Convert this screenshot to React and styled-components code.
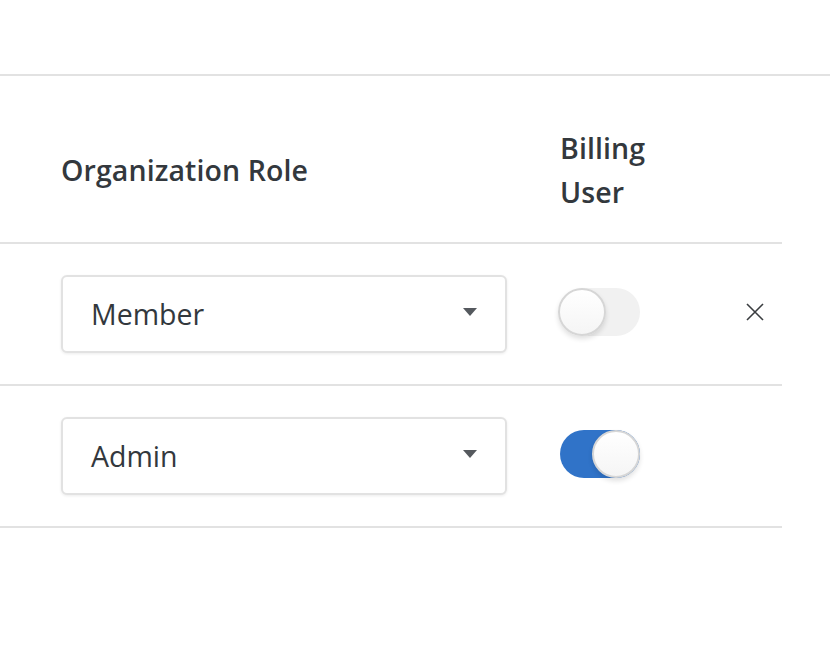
import React, { useState } from "react";
import styled, { createGlobalStyle, css } from "styled-components";

const GlobalStyle = createGlobalStyle`
  html, body {
    margin: 0;
    padding: 0;
    background: #ffffff;
    font-family: "Open Sans", "Noto Sans", sans-serif;
    color: #33383d;
  }
`;

const Page = styled.div`
  width: 830px;
  height: 670px;
  padding-top: 74px;
  box-sizing: border-box;
`;

const TopRule = styled.div`
  border-top: 2px solid #e2e2e2;
`;

const Table = styled.div`
  width: 782px;
`;

const Row = styled.div`
  display: grid;
  grid-template-columns: 446px 1fr 18px;
  column-gap: 53px;
  align-items: center;
  padding: 0 18px 0 61px;
  border-bottom: 2px solid #e2e2e2;

  ${({ header }) =>
    header
      ? css`
          padding-top: 50px;
          padding-bottom: 28px;
        `
      : css`
          height: 140px;
        `}
`;

const HeaderCell = styled.div`
  font-size: 28.5px;
  font-weight: 600;
  line-height: 44px;
  letter-spacing: 0.1px;
  color: #33383d;
  max-width: ${({ narrow }) => (narrow ? "110px" : "none")};
`;

const Select = styled.button`
  display: flex;
  align-items: center;
  justify-content: space-between;
  width: 446px;
  height: 78px;
  box-sizing: border-box;
  padding: 0 28px 0 28px;
  background: #fff;
  border: 2px solid #e2e2e2;
  border-radius: 6px;
  box-shadow: 0 1px 3px rgba(0, 0, 0, 0.08);
  font-family: "Open Sans", "Noto Sans", sans-serif;
  font-size: 28.5px;
  color: #33383d;
  cursor: pointer;
  text-align: left;
`;

const Caret = styled.span`
  width: 0;
  height: 0;
  border-left: 7px solid transparent;
  border-right: 7px solid transparent;
  border-top: 8px solid #55595e;
  margin-top: -4px;
`;

const ToggleCell = styled.div`
  display: flex;
  align-items: center;
  margin-top: -4px;
`;

const Track = styled.button`
  position: relative;
  width: 80px;
  height: 48px;
  padding: 0;
  border: none;
  border-radius: 24px;
  cursor: pointer;
  background: ${({ on }) => (on ? "#3073c8" : "#f1f1f1")};
`;

const Knob = styled.span`
  position: absolute;
  top: 0;
  left: ${({ on }) => (on ? "32px" : "-2px")};
  width: 48px;
  height: 48px;
  box-sizing: border-box;
  border-radius: 50%;
  background: linear-gradient(180deg, #ffffff 0%, #f5f5f5 100%);
  border: 2px solid #d6d6d6;
  box-shadow: 0 3px 5px rgba(0, 0, 0, 0.12);
`;

const RemoveButton = styled.button`
  width: 18px;
  height: 18px;
  padding: 0;
  border: none;
  background: transparent;
  cursor: pointer;
  display: flex;
  margin-top: -4px;
`;

const members = [
  { id: 1, role: "Member", billing: false, removable: true },
  { id: 2, role: "Admin", billing: true, removable: false },
];

function Toggle({ on, onClick }) {
  return (
    <Track on={on ? 1 : 0} onClick={onClick}>
      <Knob on={on ? 1 : 0} />
    </Track>
  );
}

export default function App() {
  const [rows, setRows] = useState(members);

  const flip = (id) =>
    setRows((r) => r.map((m) => (m.id === id ? { ...m, billing: !m.billing } : m)));

  return (
    <Page>
      <GlobalStyle />
      <TopRule />
      <Table>
        <Row header>
          <HeaderCell>Organization Role</HeaderCell>
          <HeaderCell narrow>Billing User</HeaderCell>
          <span />
        </Row>
        {rows.map((m) => (
          <Row key={m.id}>
            <Select>
              {m.role}
              <Caret />
            </Select>
            <ToggleCell>
              <Toggle on={m.billing} onClick={() => flip(m.id)} />
            </ToggleCell>
            {m.removable ? (
              <RemoveButton>
                <svg width="18" height="18" viewBox="0 0 18 18">
                  <path
                    d="M1 1 L17 17 M17 1 L1 17"
                    stroke="#3a3d40"
                    strokeWidth="1.6"
                    fill="none"
                  />
                </svg>
              </RemoveButton>
            ) : (
              <span />
            )}
          </Row>
        ))}
      </Table>
    </Page>
  );
}
